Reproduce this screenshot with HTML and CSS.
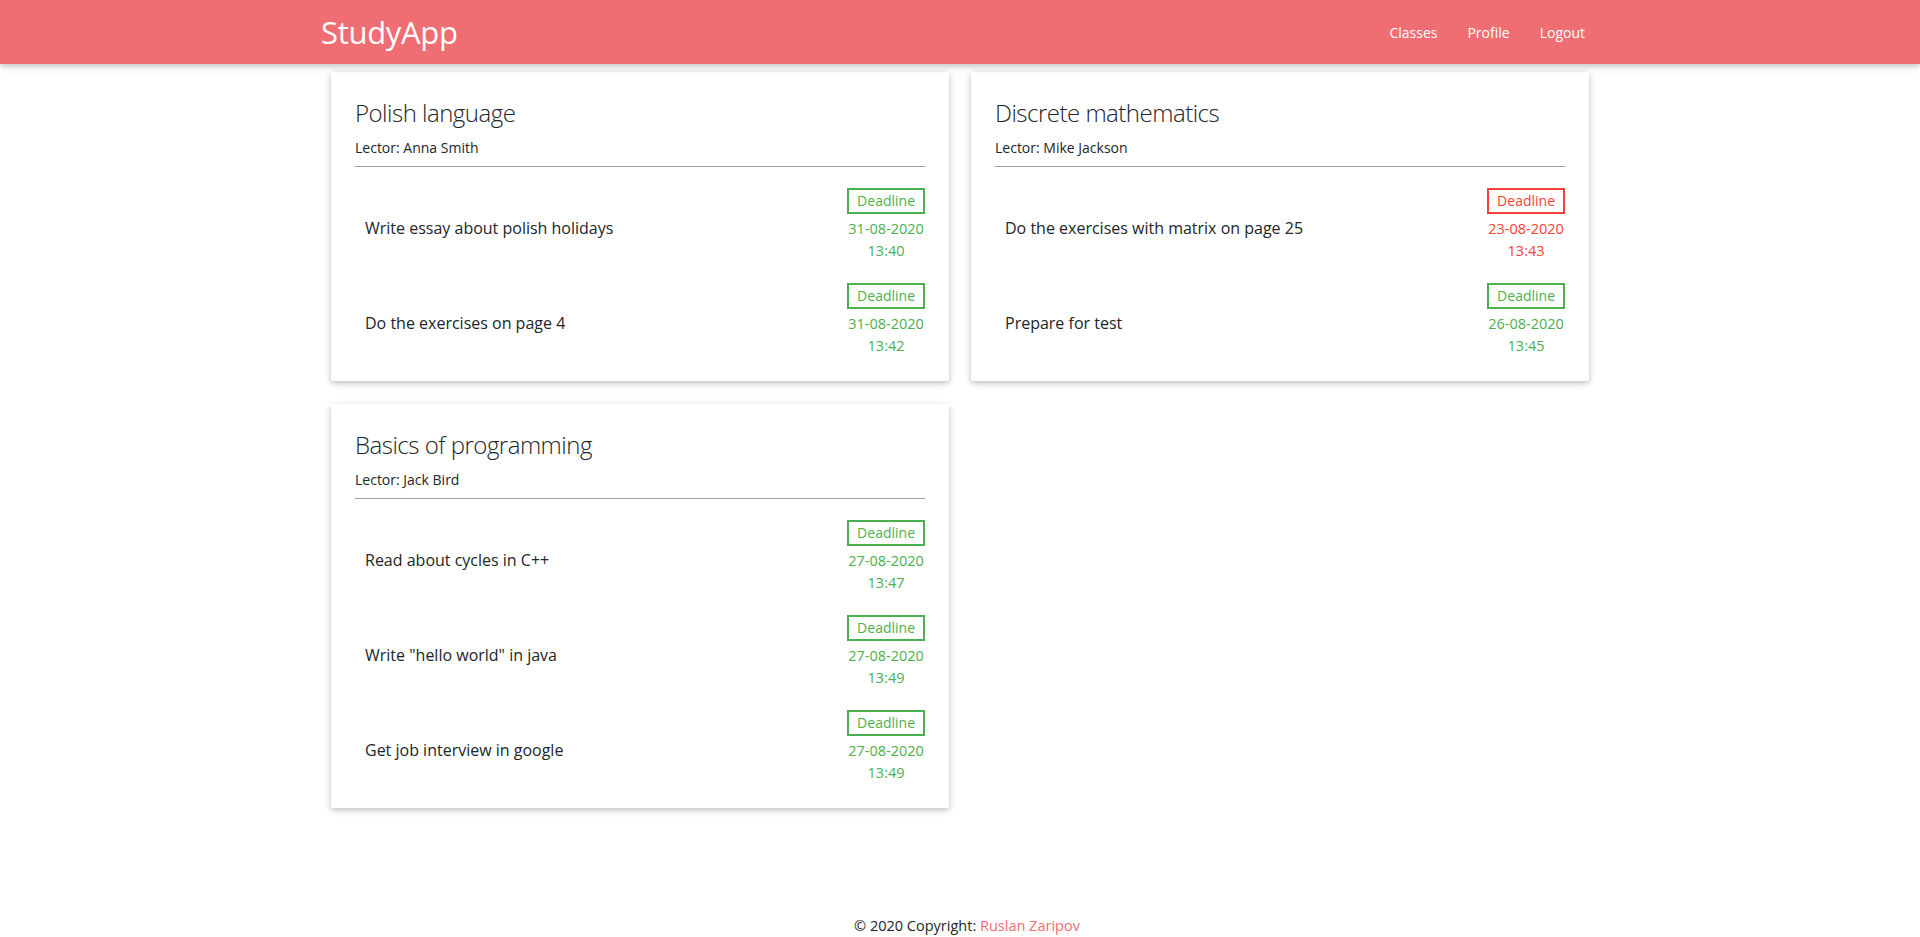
FILE: index.html
```html
<!DOCTYPE html>
<html lang="en">
<head>
<meta charset="utf-8">
<title>StudyApp</title>
<link rel="stylesheet" href="styles.css">
</head>
<body>
<header class="navbar">
  <div class="nav-inner">
    <a class="brand" href="#">StudyApp</a>
    <nav class="nav-links">
      <a href="#">Classes</a>
      <a href="#">Profile</a>
      <a href="#">Logout</a>
    </nav>
  </div>
</header>

<main class="classes">
  <section class="card">
    <h2 class="card-title">Polish language</h2>
    <p class="lector">Lector: Anna Smith</p>
    <ul class="tasks">
      <li class="task">
        <span class="task-name">Write essay about polish holidays</span>
        <div class="deadline ok"><span class="badge">Deadline</span><span class="date">31-08-2020</span><span>13:40</span></div>
      </li>
      <li class="task">
        <span class="task-name">Do the exercises on page 4</span>
        <div class="deadline ok"><span class="badge">Deadline</span><span class="date">31-08-2020</span><span>13:42</span></div>
      </li>
    </ul>
  </section>

  <section class="card">
    <h2 class="card-title">Discrete mathematics</h2>
    <p class="lector">Lector: Mike Jackson</p>
    <ul class="tasks">
      <li class="task">
        <span class="task-name">Do the exercises with matrix on page 25</span>
        <div class="deadline late"><span class="badge">Deadline</span><span class="date">23-08-2020</span><span>13:43</span></div>
      </li>
      <li class="task">
        <span class="task-name">Prepare for test</span>
        <div class="deadline ok"><span class="badge">Deadline</span><span class="date">26-08-2020</span><span>13:45</span></div>
      </li>
    </ul>
  </section>

  <section class="card">
    <h2 class="card-title">Basics of programming</h2>
    <p class="lector">Lector: Jack Bird</p>
    <ul class="tasks">
      <li class="task">
        <span class="task-name">Read about cycles in C++</span>
        <div class="deadline ok"><span class="badge">Deadline</span><span class="date">27-08-2020</span><span>13:47</span></div>
      </li>
      <li class="task">
        <span class="task-name">Write "hello world" in java</span>
        <div class="deadline ok"><span class="badge">Deadline</span><span class="date">27-08-2020</span><span>13:49</span></div>
      </li>
      <li class="task">
        <span class="task-name">Get job interview in google</span>
        <div class="deadline ok"><span class="badge">Deadline</span><span class="date">27-08-2020</span><span>13:49</span></div>
      </li>
    </ul>
  </section>
</main>

<footer class="footer">
  © 2020 Copyright: <a href="#">Ruslan Zaripov</a>
</footer>
</body>
</html>
```

FILE: styles.css
```css
* { box-sizing: border-box; }

html, body { height: 100%; }

body {
  margin: 0;
  min-height: 100vh;
  display: flex;
  flex-direction: column;
  font-family: "Open Sans", "Noto Sans", sans-serif;
  color: #212529;
  background: #fff;
}

a { text-decoration: none; }

.navbar {
  background: #ef6e73;
  height: 64px;
  box-shadow: 0 2px 5px rgba(0,0,0,.16), 0 2px 10px rgba(0,0,0,.12);
  position: relative;
  z-index: 2;
}

.nav-inner {
  width: 1280px;
  margin: 0 auto;
  height: 100%;
  display: flex;
  align-items: center;
  justify-content: space-between;
}

.brand {
  color: #fff;
  font-size: 31px;
  padding-left: 1px;
  letter-spacing: -0.3px;
}

.nav-links { display: flex; }

.nav-links a {
  color: #fff;
  font-size: 14px;
  padding: 0 15px;
}

.classes {
  width: 1258px;
  margin: 8px auto 0;
  display: grid;
  grid-template-columns: 1fr 1fr;
  column-gap: 22px;
  row-gap: 23px;
  align-items: start;
}

.card {
  background: #fff;
  padding: 22px 24px 14px;
  box-shadow: 0 2px 5px rgba(0,0,0,.16), 0 2px 10px rgba(0,0,0,.12);
  border-radius: 2px;
}

.card-title {
  margin: 0;
  font-weight: 300;
  font-size: 24px;
  letter-spacing: -0.5px;
  line-height: 38px;
  color: #212529;
}

.lector {
  margin: 6px 0 0;
  font-size: 14px;
  line-height: 20px;
  padding-bottom: 8px;
  border-bottom: 1px solid #9e9e9e;
}

.tasks {
  list-style: none;
  margin: 0;
  padding: 10px 0 0;
}

.task {
  display: flex;
  align-items: center;
  justify-content: space-between;
  padding: 10.5px 0;
}

.task-name {
  padding-left: 10px;
  margin-top: 7px;
  font-size: 16px;
}

.deadline {
  display: flex;
  flex-direction: column;
  align-items: center;
  font-size: 14.5px;
  line-height: 22px;
}

.badge {
  border: 2px solid currentColor;
  padding: 0 8px;
  font-size: 14px;
  line-height: 22px;
}

.date { margin-top: 4px; }

.ok { color: #4caf50; }
.late { color: #f44336; }

.footer {
  margin-top: auto;
  text-align: center;
  font-size: 14.5px;
  padding: 0 0 1px 14px;
  line-height: 20px;
  color: #212529;
}

.footer a { color: #ef6e73; }
```
